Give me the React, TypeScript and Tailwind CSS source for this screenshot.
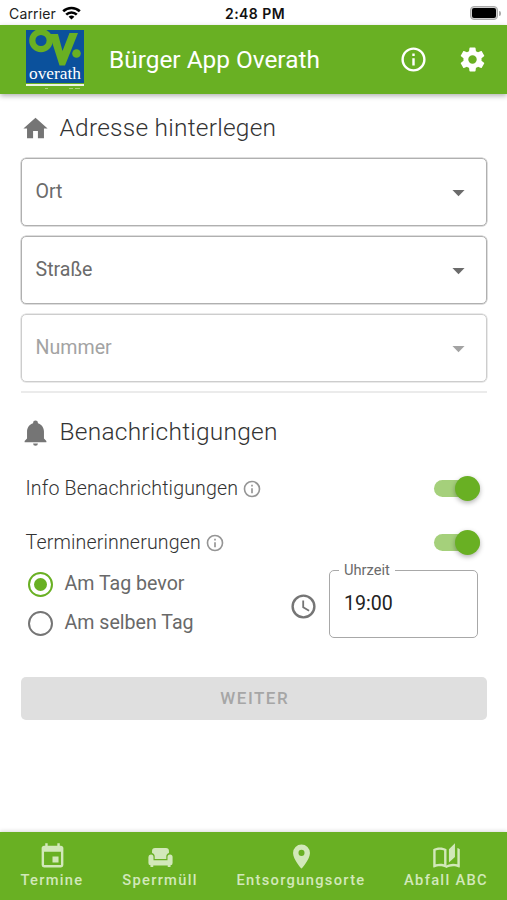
import type { ReactNode } from "react";

const paths = {
  home: "M10,20V14H14V20H19V12H22L12,3L2,12H5V20H10Z",
  bell: "M21,19V20H3V19L5,17V11C5,7.9 7.03,5.17 10,4.29C10,4.19 10,4.1 10,4A2,2 0 0,1 12,2A2,2 0 0,1 14,4C14,4.1 14,4.19 14,4.29C16.97,5.17 19,7.9 19,11V17L21,19M14,21A2,2 0 0,1 12,23A2,2 0 0,1 10,21",
  info: "M11,9H13V7H11M12,20C7.59,20 4,16.41 4,12C4,7.59 7.59,4 12,4C16.41,4 20,7.59 20,12C20,16.41 16.41,20 12,20M12,2A10,10 0 0,0 2,12A10,10 0 0,0 12,22A10,10 0 0,0 22,12A10,10 0 0,0 12,2M11,17H13V11H11V17Z",
  cog: "M12,15.5A3.5,3.5 0 0,1 8.5,12A3.5,3.5 0 0,1 12,8.5A3.5,3.5 0 0,1 15.5,12A3.5,3.5 0 0,1 12,15.5M19.43,12.97C19.47,12.65 19.5,12.33 19.5,12C19.5,11.67 19.47,11.34 19.43,11L21.54,9.37C21.73,9.22 21.78,8.95 21.66,8.73L19.66,5.27C19.54,5.05 19.27,4.96 19.05,5.05L16.56,6.05C16.04,5.66 15.5,5.32 14.87,5.07L14.5,2.42C14.46,2.18 14.25,2 14,2H10C9.75,2 9.54,2.18 9.5,2.42L9.13,5.07C8.5,5.32 7.96,5.66 7.44,6.05L4.95,5.05C4.73,4.96 4.46,5.05 4.34,5.27L2.34,8.73C2.21,8.95 2.27,9.22 2.46,9.37L4.57,11C4.53,11.34 4.5,11.67 4.5,12C4.5,12.33 4.53,12.65 4.57,12.97L2.46,14.63C2.27,14.78 2.21,15.05 2.34,15.27L4.34,18.73C4.46,18.95 4.73,19.03 4.95,18.95L7.44,17.94C7.96,18.34 8.5,18.68 9.13,18.93L9.5,21.58C9.54,21.82 9.75,22 10,22H14C14.25,22 14.46,21.82 14.5,21.58L14.87,18.93C15.5,18.67 16.04,18.34 16.56,17.94L19.05,18.95C19.27,19.03 19.54,18.95 19.66,18.73L21.66,15.27C21.78,15.05 21.73,14.78 21.54,14.63L19.43,12.97Z",
  clock: "M12,20A8,8 0 0,0 20,12A8,8 0 0,0 12,4A8,8 0 0,0 4,12A8,8 0 0,0 12,20M12,2A10,10 0 0,1 22,12A10,10 0 0,1 12,22C6.47,22 2,17.5 2,12A10,10 0 0,1 12,2M12.5,7V12.25L17,14.92L16.25,16.15L11,13V7H12.5Z",
  calendar: "M19,19H5V8H19M16,1V3H8V1H6V3H5C3.89,3 3,3.89 3,5V19A2,2 0 0,0 5,21H19A2,2 0 0,0 21,19V5C21,3.89 20.1,3 19,3H18V1M17,12H12V17H17V12Z",
  sofa: "M7.500,5H16.500A2.500,2.500 0 0,1 19,7.500V9.200C17.600,9.500 16.800,10.700 16.800,12V14H7.200V12C7.200,10.700 6.400,9.500 5,9.200V7.500A2.500,2.500 0 0,1 7.500,5M4,10.300A2.100,2.100 0 0,1 6.200,12.400V15H17.800V12.400A2.100,2.100 0 0,1 22,12.400V17.300A2,2 0 0,1 20.300,19.300V20.700H18V19.500H6V20.700H3.700V19.300A2,2 0 0,1 2,17.300V12.400A2.100,2.100 0 0,1 4,10.300Z",
  marker: "M12,11.5A2.5,2.5 0 0,1 9.5,9A2.5,2.5 0 0,1 12,6.5A2.5,2.5 0 0,1 14.5,9A2.5,2.5 0 0,1 12,11.5M12,2A7,7 0 0,0 5,9C5,14.25 12,22 12,22C12,22 19,14.25 19,9A7,7 0 0,0 12,2Z",
  book: "M19 1L14 6V17L19 12.5V1M21 5V18.5C19.9 18.15 18.7 18 17.5 18C15.8 18 13.35 18.65 12 19.5V6C10.55 4.9 8.45 4.5 6.5 4.5C4.55 4.5 2.45 4.9 1 6V20.65C1 20.9 1.25 21.15 1.5 21.15C1.6 21.15 1.65 21.1 1.75 21.1C3.1 20.45 5.05 20 6.5 20C8.45 20 10.55 20.4 12 21.5C13.35 20.65 15.8 20 17.5 20C19.15 20 20.85 20.3 22.25 21.05C22.35 21.1 22.4 21.1 22.5 21.1C22.75 21.1 23 20.85 23 20.6V6C22.4 5.55 21.75 5.25 21 5M10 18.41C8.75 18.09 7.5 18 6.5 18C5.44 18 4.18 18.19 3 18.5V7.13C3.91 6.73 5.14 6.5 6.5 6.5C7.86 6.5 9.09 6.73 10 7.13V18.41Z",
  caret: "M7,10L12,15L17,10H7Z",
};

function Icon({ name, className }: { name: keyof typeof paths; className: string }) {
  return (
    <svg viewBox="0 0 24 24" fill="currentColor" className={`shrink-0 ${className}`}>
      <path d={paths[name]} />
    </svg>
  );
}

function StatusBar() {
  return (
    <div className="flex h-[25px] items-center bg-white pt-px font-['Inter','Liberation_Sans',sans-serif] text-black">
      <div className="flex flex-1 items-center gap-[6px] pl-[9px] text-[14px] text-[#222]">
        <span className="tracking-[0.150px]">Carrier</span>
        <svg viewBox="0 0 19 14" className="h-[14px] w-[19px]" fill="none" stroke="#000" strokeWidth="2.6">
          <path d="M1.2 5.3a12 12 0 0 1 16.6 0" />
          <path d="M4.2 8.6a7.6 7.6 0 0 1 10.6 0" />
          <path d="M9.5 13.6 6.6 10.8a4.2 4.2 0 0 1 5.8 0z" fill="#000" stroke="none" />
        </svg>
      </div>
      <div className="text-[14px] font-semibold tracking-[0.450px] text-[#111]">2:48 PM</div>
      <div className="flex flex-1 items-center justify-end pr-[6px]">
        <div className="h-[14px] w-[28px] rounded-[4px] border border-[#aaa] bg-[#d0d0d0] p-px">
          <div className="h-full rounded-[2px] bg-black" />
        </div>
        <div className="ml-px h-[5px] w-[2px] rounded-r-full bg-[#aaa]" />
      </div>
    </div>
  );
}

function Logo() {
  return (
    <svg viewBox="0 0 60 62" className="h-[62px] w-[60px] shrink-0">
      <rect x="1" y="1" width="58" height="53" fill="#0b519c" />
      <circle cx="16" cy="11.500" r="8.700" fill="none" stroke="#69b023" strokeWidth="6.200" />
      <path d="M24.500 5H33L37.500 22L44.500 4H53L40 36.500H34.500Z" fill="#69b023" />
      <circle cx="51.500" cy="24.500" r="4.300" fill="#69b023" />
      <text x="30" y="50" textAnchor="middle" textLength="52" lengthAdjust="spacingAndGlyphs" fontSize="17.500" fill="#fff" fontFamily="'Liberation Serif', serif">overath</text>
      <rect x="1" y="55" width="58" height="2" fill="#eef5e5" />
      <path d="M20 59.500h3M44 59.500h4M50 59.500h5" stroke="#a9d07c" strokeWidth="1" />
    </svg>
  );
}

function SelectField({ label, disabled = false }: { label: string; disabled?: boolean }) {
  return (
    <div className={`flex h-[68px] items-center justify-between rounded-[5px] border pr-[13px] pl-[14px] text-[19.600px] ${disabled ? "border-[#cdcdcd] text-[#a3a3a3] shadow-[0_0_0_0.500px_#d6d6d6]" : "border-[#b0b0b0] text-[#6b6b6b] shadow-[0_0_0_0.500px_#bdbdbd]"}`}>
      <span>{label}</span>
      <Icon name="caret" className="mt-[2px] size-[29px]" />
    </div>
  );
}

function Heading({ icon, children }: { icon: "home" | "bell"; children: ReactNode }) {
  return (
    <h2 className="flex h-[34px] items-center gap-[10px] text-[24.500px] font-light tracking-[0.240px] text-[#333]">
      <Icon name={icon} className="size-[29px] text-[#757575]" />
      {children}
    </h2>
  );
}

function ToggleRow({ label }: { label: string }) {
  return (
    <div className="flex h-[54px] items-center text-[19.600px] font-light tracking-[0.150px] text-[#333]">
      <span>{label}</span>
      <Icon name="info" className="ml-[4px] size-[20px] text-[#959595]" />
      <div className="ml-auto flex h-[17px] w-[46px] items-center justify-end rounded-full bg-[#a5d07b]">
        <div className="size-[25px] rounded-full bg-[#69b023] shadow-[0_2px_5px_rgba(0,0,0,0.300)]" />
      </div>
    </div>
  );
}

function RadioRow({ label, checked = false }: { label: string; checked?: boolean }) {
  return (
    <div className="flex h-[39px] items-center gap-[12px] text-[19.600px] text-[#696969]">
      <div className={`flex size-[25px] items-center justify-center rounded-full border-2 ${checked ? "border-[#69b023]" : "border-[#757575]"}`}>
        {checked && <div className="size-[13px] rounded-full bg-[#69b023]" />}
      </div>
      {label}
    </div>
  );
}

function NavItem({ icon, label, className }: { icon: keyof typeof paths; label: string; className: string }) {
  return (
    <div className={`flex flex-col items-center ${className}`}>
      <Icon name={icon} className="size-[29px]" />
      <span className="-mt-px text-[14.700px] leading-[20px] tracking-[1.300px] whitespace-nowrap">{label}</span>
    </div>
  );
}

export default function App() {
  return (
    <div className="flex h-[900px] w-[507px] flex-col overflow-hidden bg-white font-['Roboto',sans-serif]">
      <StatusBar />
      <header className="flex h-[69px] shrink-0 items-center bg-[#69b023] pr-[20px] pl-[25px] text-white shadow-[0_2px_5px_rgba(0,0,0,0.300)]">
        <Logo />
        <h1 className="ml-[24px] pt-[2px] text-[24.400px]">Bürger App Overath</h1>
        <Icon name="info" className="ml-auto size-[29px]" />
        <Icon name="cog" className="ml-[30px] size-[29px]" />
      </header>
      <main className="flex flex-1 flex-col pt-[17px] pr-[20px] pl-[20.500px]">
        <Heading icon="home">Adresse hinterlegen</Heading>
        <div className="mt-[12.500px] flex flex-col gap-[10px]">
          <SelectField label="Ort" />
          <SelectField label="Straße" />
          <SelectField label="Nummer" disabled />
        </div>
        <div className="mt-[9.500px] mb-[22.500px] h-[2px] bg-[#ebebeb]" />
        <Heading icon="bell">Benachrichtigungen</Heading>
        <div className="mt-[12px] pr-[7px] pl-[5px]">
          <ToggleRow label="Info Benachrichtigungen" />
          <ToggleRow label="Terminerinnerungen" />
        </div>
        <div className="flex pr-[9px] pl-[7px]">
          <div className="-mt-[5px] flex-1">
            <RadioRow label="Am Tag bevor" checked />
            <RadioRow label="Am selben Tag" />
          </div>
          <Icon name="clock" className="mt-[22px] mr-[11px] size-[29px] text-[#757575]" />
          <fieldset className="-mt-[8px] h-[76px] w-[149px] rounded-[5px] border border-[#a8a8a8] pl-[14px] text-[#222]">
            <legend className="-ml-[5px] px-[5px] text-[14.700px] leading-[17px] text-[#6b6b6b]">Uhrzeit</legend>
            <div className="mt-[12px] text-[19.600px] leading-[26px]">19:00</div>
          </fieldset>
        </div>
        <button className="mt-[34.500px] h-[43px] rounded-[5px] bg-[#dfdfdf] pl-[2px] text-[17px] font-medium tracking-[1.500px] text-[#a6a6a6]">WEITER</button>
      </main>
      <nav className="flex h-[68px] shrink-0 bg-[#69b023] pt-[10px] font-medium text-[#d2e8ba] shadow-[0_-1px_4px_rgba(0,0,0,0.150)]">
        <NavItem icon="calendar" label="Termine" className="w-[104px]" />
        <NavItem icon="sofa" label="Sperrmüll" className="w-[112px]" />
        <NavItem icon="marker" label="Entsorgungsorte" className="w-[170px]" />
        <NavItem icon="book" label="Abfall ABC" className="w-[120px]" />
      </nav>
    </div>
  );
}
